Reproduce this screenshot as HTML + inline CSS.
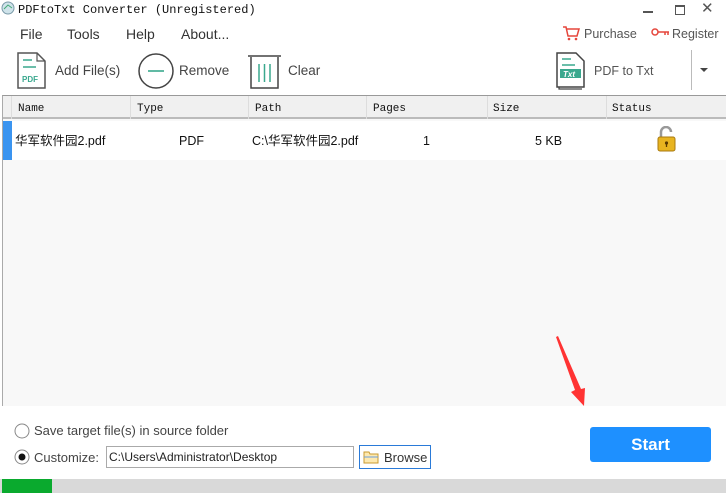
<!DOCTYPE html>
<html><head><meta charset="utf-8"><style>
*{margin:0;padding:0;box-sizing:border-box}
body{width:726px;height:493px;background:#fff;position:relative;overflow:hidden;font-family:"Liberation Sans","Noto Sans CJK SC",sans-serif;font-size:13px;color:#333;line-height:16px}
.a{position:absolute}
.mono{font-family:"Liberation Mono","Noto Sans CJK SC",monospace;font-size:11px;color:#111}
.tb{font-size:13.5px;color:#444}
.r{font-size:12.5px;color:#111;line-height:16px}
</style></head><body>
<svg class="a" style="left:1px;top:1px" width="14" height="14"><circle cx="7" cy="7" r="6" fill="#cfe3ea" stroke="#7a9aa8"/><path d="M3 8l4-4 4 3" stroke="#4a7" fill="none"/></svg>
<div class="a mono" style="left:18px;top:2px;font-size:12px">PDFtoTxt Converter (Unregistered)</div>
<div class="a" style="left:643px;top:11px;width:10px;height:1.5px;background:#555"></div>
<div class="a" style="left:675px;top:5px;width:10px;height:10px;border:1.5px solid #555;border-top-width:2.5px"></div>
<div class="a" style="left:701px;top:1px;font-size:15px;color:#555">✕</div>
<div class="a" style="left:20px;top:26px;font-size:14px">File</div>
<div class="a" style="left:67px;top:26px;font-size:14px">Tools</div>
<div class="a" style="left:126px;top:26px;font-size:14px">Help</div>
<div class="a" style="left:181px;top:26px;font-size:14px">About...</div>
<svg class="a" style="left:562px;top:25px" width="18" height="16"><path d="M1 2h3l2 9h9l2-7H5" stroke="#e5463c" fill="none" stroke-width="1.5"/><circle cx="7" cy="14" r="1.3" fill="#e5463c"/><circle cx="14" cy="14" r="1.3" fill="#e5463c"/></svg>
<div class="a" style="left:584px;top:26px;font-size:12.5px;color:#555">Purchase</div>
<svg class="a" style="left:651px;top:28px" width="20" height="10"><circle cx="4" cy="4" r="3" stroke="#e5463c" fill="none" stroke-width="1.5"/><path d="M7 4h11M14 4v3M17 4v3" stroke="#e5463c" stroke-width="1.5"/></svg>
<div class="a" style="left:672px;top:26px;font-size:12.5px;color:#555">Register</div>
<svg class="a" style="left:17px;top:52px" width="30" height="37"><path d="M1 1h19l8 8v27H1z" fill="#fff" stroke="#555" stroke-width="1.5"/><path d="M20 1v8h8" fill="none" stroke="#555" stroke-width="1.2"/><path d="M6 8h9M6 15h13" stroke="#3aa88e" stroke-width="1.5"/><text x="5" y="30" font-size="8" font-weight="bold" fill="#3aa88e" font-family="Liberation Sans">PDF</text></svg>
<div class="a tb" style="left:55px;top:63px">Add File(s)</div>
<svg class="a" style="left:138px;top:53px" width="37" height="37"><circle cx="18" cy="18" r="17" fill="none" stroke="#444" stroke-width="1.5"/><path d="M10 18h16" stroke="#3aa88e" stroke-width="1.6"/></svg>
<div class="a tb" style="left:179px;top:63px">Remove</div>
<svg class="a" style="left:247px;top:53px" width="37" height="37"><path d="M1 3h33" stroke="#444" stroke-width="1.5"/><path d="M4 4v31h27V4" fill="none" stroke="#444" stroke-width="1.5"/><path d="M12 11v18M17.5 11v18M23 11v18" stroke="#3aa88e" stroke-width="1.5"/></svg>
<div class="a tb" style="left:288px;top:63px">Clear</div>
<svg class="a" style="left:556px;top:52px" width="32" height="38"><path d="M3 4v33h23" fill="none" stroke="#444" stroke-width="1.2"/><path d="M1 1h19l8 8v26H1z" fill="#fff" stroke="#444" stroke-width="1.5"/><path d="M6 7h9M6 13h13" stroke="#3aa88e" stroke-width="1.5"/><rect x="4" y="17" width="21" height="9" fill="#3aa88e"/><text x="7" y="25" font-size="8" font-weight="bold" font-style="italic" fill="#fff" font-family="Liberation Sans">Txt</text></svg>
<div class="a" style="left:594px;top:63px;font-size:12.5px;color:#555">PDF to Txt</div>
<div class="a" style="left:691px;top:50px;width:1px;height:40px;background:#bbb"></div>
<div class="a" style="left:700px;top:68px;border-left:4px solid transparent;border-right:4px solid transparent;border-top:4px solid #444"></div>
<div class="a" style="left:2px;top:95px;width:724px;height:311px;background:#f8f8f8;border-top:1px solid #999;border-left:1px solid #aaa"></div>
<div class="a" style="left:3px;top:96px;width:723px;height:23px;background:#f0f0f0;border-bottom:2px solid #bbb"></div>
<div class="a" style="left:11px;top:96px;width:1px;height:23px;background:#ddd"></div>
<div class="a" style="left:130px;top:96px;width:1px;height:23px;background:#ddd"></div>
<div class="a" style="left:248px;top:96px;width:1px;height:23px;background:#ddd"></div>
<div class="a" style="left:366px;top:96px;width:1px;height:23px;background:#ddd"></div>
<div class="a" style="left:487px;top:96px;width:1px;height:23px;background:#ddd"></div>
<div class="a" style="left:606px;top:96px;width:1px;height:23px;background:#ddd"></div>
<div class="a mono" style="left:18px;top:101px">Name</div>
<div class="a mono" style="left:137px;top:101px">Type</div>
<div class="a mono" style="left:255px;top:101px">Path</div>
<div class="a mono" style="left:373px;top:101px">Pages</div>
<div class="a mono" style="left:493px;top:101px">Size</div>
<div class="a mono" style="left:612px;top:101px">Status</div>
<div class="a" style="left:3px;top:121px;width:723px;height:39px;background:#fff"></div>
<div class="a" style="left:3px;top:121px;width:9px;height:39px;background:#3a94f0"></div>
<div class="a r" style="left:15px;top:133px">华军软件园2.pdf</div>
<div class="a r" style="left:179px;top:133px">PDF</div>
<div class="a r" style="left:252px;top:133px">C:\华军软件园2.pdf</div>
<div class="a r" style="left:423px;top:133px">1</div>
<div class="a r" style="left:535px;top:133px">5 KB</div>
<svg class="a" style="left:656px;top:126px" width="22" height="26"><path d="M5 11V6a5 5 0 0110 0" fill="none" stroke="#999" stroke-width="2.5"/><rect x="2" y="11" width="17" height="14" rx="2" fill="#e8b420" stroke="#a97a10"/><circle cx="10.5" cy="17" r="1.6" fill="#5a3a00"/><path d="M10.5 17v4" stroke="#5a3a00" stroke-width="1.3"/></svg>
<svg class="a" style="left:550px;top:330px" width="45" height="80"><path d="M6 7L25 60L21 62L34 76L35 58L31 59L8 6Z" fill="#f33"/></svg>
<svg class="a" style="left:14px;top:423px" width="16" height="16"><circle cx="8" cy="8" r="7" fill="#fff" stroke="#888"/></svg>
<div class="a" style="left:34px;top:423px;color:#444">Save target file(s) in source folder</div>
<svg class="a" style="left:14px;top:449px" width="16" height="16"><circle cx="8" cy="8" r="7" fill="#fff" stroke="#888"/><circle cx="8" cy="8" r="3.5" fill="#111"/></svg>
<div class="a" style="left:34px;top:450px;color:#444">Customize:</div>
<div class="a" style="left:106px;top:446px;width:248px;height:22px;border:1px solid #aaa;padding:2px 2px;font-size:12px;color:#222">C:\Users\Administrator\Desktop</div>
<div class="a" style="left:359px;top:445px;width:72px;height:24px;border:1px solid #2a7ad8;background:#fff"></div>
<svg class="a" style="left:363px;top:450px" width="16" height="14"><path d="M1 2h5l1 2h8v9H1z" fill="#fde9b0" stroke="#c99a30"/><path d="M1 7h14" stroke="#6aa0e0"/></svg>
<div class="a" style="left:384px;top:450px;color:#333">Browse</div>
<div class="a" style="left:590px;top:427px;width:121px;height:35px;background:#1e90ff;border-radius:3px;color:#fff;font-size:17px;font-weight:bold;text-align:center;line-height:35px">Start</div>
<div class="a" style="left:0;top:479px;width:726px;height:14px;background:#d9d9d9"></div>
<div class="a" style="left:2px;top:479px;width:50px;height:14px;background:#0aaa2e"></div>
</body></html>
